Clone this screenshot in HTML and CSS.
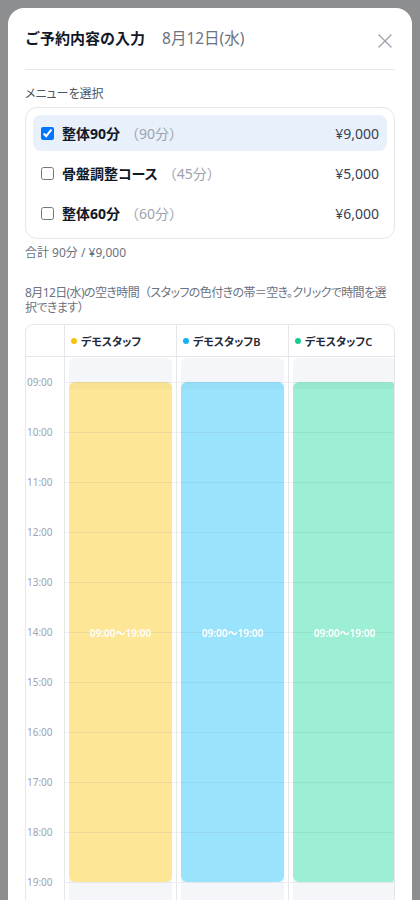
FILE: index.html
```html
<!DOCTYPE html>
<html lang="ja">
<head>
<meta charset="utf-8">
<title>ご予約内容の入力</title>
<link rel="stylesheet" href="styles.css">
</head>
<body>
<div class="modal">
  <header class="modal-head">
    <h1 class="title">ご予約内容の入力</h1>
    <span class="title-date">8月12日(水)</span>
    <button class="close" aria-label="閉じる">
      <svg width="14" height="14" viewBox="0 0 14 14"><path d="M1 1L13 13M13 1L1 13" stroke="#9ca3af" stroke-width="1.4" fill="none" stroke-linecap="round"/></svg>
    </button>
  </header>

  <div class="section-label">メニューを選択</div>
  <div class="menu-box">
    <label class="menu-row selected">
      <input type="checkbox" checked>
      <span class="menu-name">整体90分</span>
      <span class="menu-dur">（90分）</span>
      <span class="menu-price">¥9,000</span>
    </label>
    <label class="menu-row">
      <input type="checkbox">
      <span class="menu-name">骨盤調整コース</span>
      <span class="menu-dur">（45分）</span>
      <span class="menu-price">¥5,000</span>
    </label>
    <label class="menu-row">
      <input type="checkbox">
      <span class="menu-name">整体60分</span>
      <span class="menu-dur">（60分）</span>
      <span class="menu-price">¥6,000</span>
    </label>
  </div>
  <div class="total">合計 90分 / ¥9,000</div>

  <p class="desc">8月12日(水)の空き時間<span class="fw">（</span>スタッフの色付きの帯＝空き。クリックで時間を選択できます<span class="fw">）</span></p>

  <div class="calendar">
    <div class="cal-inner">
      <div class="col time-col">
        <div class="col-head"></div>
        <div class="col-body">
          <span class="hour-label" style="top:25px">09:00</span>
          <span class="hour-label" style="top:75px">10:00</span>
          <span class="hour-label" style="top:125px">11:00</span>
          <span class="hour-label" style="top:175px">12:00</span>
          <span class="hour-label" style="top:225px">13:00</span>
          <span class="hour-label" style="top:275px">14:00</span>
          <span class="hour-label" style="top:325px">15:00</span>
          <span class="hour-label" style="top:375px">16:00</span>
          <span class="hour-label" style="top:425px">17:00</span>
          <span class="hour-label" style="top:475px">18:00</span>
          <span class="hour-label" style="top:525px">19:00</span>
          <span class="hour-label" style="top:575px">20:00</span>
        </div>
      </div>

      <div class="col staff-col">
        <div class="col-head"><span class="dot dot-yellow"></span><span class="staff-name">デモスタッフ</span></div>
        <div class="col-body">
          <div class="track">
            <div class="band band-yellow" style="top:24px;height:500px"><span class="band-label">09:00〜19:00</span></div>
          </div>
          <div class="lines">
            <i style="top:25px"></i><i style="top:75px"></i><i style="top:125px"></i><i style="top:175px"></i><i style="top:225px"></i><i style="top:275px"></i><i style="top:325px"></i><i style="top:375px"></i><i style="top:425px"></i><i style="top:475px"></i><i style="top:525px"></i><i style="top:575px"></i>
          </div>
        </div>
      </div>

      <div class="col staff-col">
        <div class="col-head"><span class="dot dot-blue"></span><span class="staff-name">デモスタッフB</span></div>
        <div class="col-body">
          <div class="track">
            <div class="band band-blue" style="top:24px;height:500px"><span class="band-label">09:00〜19:00</span></div>
          </div>
          <div class="lines">
            <i style="top:25px"></i><i style="top:75px"></i><i style="top:125px"></i><i style="top:175px"></i><i style="top:225px"></i><i style="top:275px"></i><i style="top:325px"></i><i style="top:375px"></i><i style="top:425px"></i><i style="top:475px"></i><i style="top:525px"></i><i style="top:575px"></i>
          </div>
        </div>
      </div>

      <div class="col staff-col">
        <div class="col-head"><span class="dot dot-green"></span><span class="staff-name">デモスタッフC</span></div>
        <div class="col-body">
          <div class="track">
            <div class="band band-green" style="top:24px;height:500px"><span class="band-label">09:00〜19:00</span></div>
          </div>
          <div class="lines">
            <i style="top:25px"></i><i style="top:75px"></i><i style="top:125px"></i><i style="top:175px"></i><i style="top:225px"></i><i style="top:275px"></i><i style="top:325px"></i><i style="top:375px"></i><i style="top:425px"></i><i style="top:475px"></i><i style="top:525px"></i><i style="top:575px"></i>
          </div>
        </div>
      </div>
    </div>
  </div>
</div>
</body>
</html>
```

FILE: styles.css
```css
* { box-sizing: border-box; }

html, body {
  margin: 0;
  padding: 0;
}

body {
  background: #8d8e90;
  padding: 8px;
  font-family: "Noto Sans", "Noto Sans CJK JP", sans-serif;
  font-feature-settings: "palt";
  color: #111827;
}

.modal {
  background: #ffffff;
  border-radius: 16px;
  padding: 0 17px 40px;
  width: 404px;
}

.modal-head {
  display: flex;
  align-items: flex-start;
  padding: 19px 0 20px;
  border-bottom: 1px solid #e5e7eb;
}

.title {
  margin: 0;
  font-size: 15px;
  line-height: 22px;
  font-weight: 700;
  color: #111827;
  font-feature-settings: normal;
}

.title-date {
  margin-left: 17px;
  font-size: 15.5px;
  line-height: 22px;
  color: #6b7280;
}

.close {
  margin-left: auto;
  margin-right: 3px;
  margin-top: 7px;
  width: 14px;
  height: 14px;
  padding: 0;
  border: 0;
  background: none;
  display: flex;
}

.section-label {
  margin: 16px 0 5px;
  font-size: 12px;
  line-height: 16px;
  color: #4b5563;
}

.menu-box {
  border: 1px solid #e5e7eb;
  border-radius: 12px;
  padding: 7px;
  display: flex;
  flex-direction: column;
  gap: 4px;
}

.menu-row {
  display: flex;
  align-items: center;
  height: 36px;
  padding: 0 8px;
  border-radius: 8px;
  font-size: 14px;
}

.menu-row.selected {
  background: #e8f0fb;
}

.menu-row input {
  width: 13px;
  height: 13px;
  margin: 0 8px 0 0;
}

.menu-name {
  font-weight: 700;
  color: #111827;
}

.menu-dur {
  margin-left: 5px;
  color: #9ca3af;
  font-feature-settings: normal;
}

.menu-price {
  margin-left: auto;
  color: #374151;
}

.total {
  margin-top: 6px;
  font-size: 12px;
  line-height: 16px;
  color: #6b7280;
}

.desc {
  margin: 24px 0 9px;
  width: 366px;
  font-size: 12px;
  line-height: 15px;
  letter-spacing: -0.6px;
  color: #6b7280;
}

.fw {
  font-feature-settings: normal;
}

.calendar {
  width: 370px;
  border: 1px solid #e5e7eb;
  border-radius: 8px;
  overflow: hidden;
}

.cal-inner {
  display: flex;
  width: max-content;
}

.col {
  display: flex;
  flex-direction: column;
}

.time-col { width: 38px; }

.staff-col {
  width: 112px;
  border-left: 1px solid #e5e7eb;
}

.col-head {
  height: 32px;
  border-bottom: 1px solid #e5e7eb;
  display: flex;
  align-items: center;
  padding-left: 6px;
  gap: 4px;
}

.dot {
  width: 6px;
  height: 6px;
  border-radius: 50%;
  flex: none;
}

.dot-yellow { background: #f7c20a; }
.dot-blue { background: #17b0f6; }
.dot-green { background: #16cc8c; }

.staff-name {
  font-size: 11px;
  font-weight: 600;
  color: #1f2937;
}

.col-body {
  position: relative;
  height: 600px;
}

.hour-label {
  position: absolute;
  left: 1px;
  transform: translateY(-50%);
  font-size: 10px;
  line-height: 12px;
  color: #9ca3af;
  font-feature-settings: normal;
}

.staff-col .col-body {
  padding: 1px 4px 0 4px;
}

.track {
  position: relative;
  height: 100%;
  background: #f5f6fa;
  border-radius: 6px;
}

.band {
  position: absolute;
  left: 0;
  right: 0;
  border-radius: 6px;
  display: flex;
  align-items: center;
  justify-content: center;
  overflow: hidden;
}

.band::before {
  content: "";
  position: absolute;
  left: 0;
  right: 0;
  top: 0;
  height: 7px;
  background: rgba(0, 0, 0, 0.025);
}

.band-yellow { background: #fde796; }
.band-blue { background: #9ae3fd; }
.band-green { background: #9ceed4; }

.band-label {
  position: relative;
  z-index: 2;
  color: #ffffff;
  font-size: 10px;
  font-weight: 600;
  font-feature-settings: normal;
}

.lines {
  position: absolute;
  inset: 0;
  pointer-events: none;
}

.lines i {
  position: absolute;
  left: 0;
  right: 0;
  height: 1px;
  background: rgba(120, 135, 165, 0.13);
}
```
